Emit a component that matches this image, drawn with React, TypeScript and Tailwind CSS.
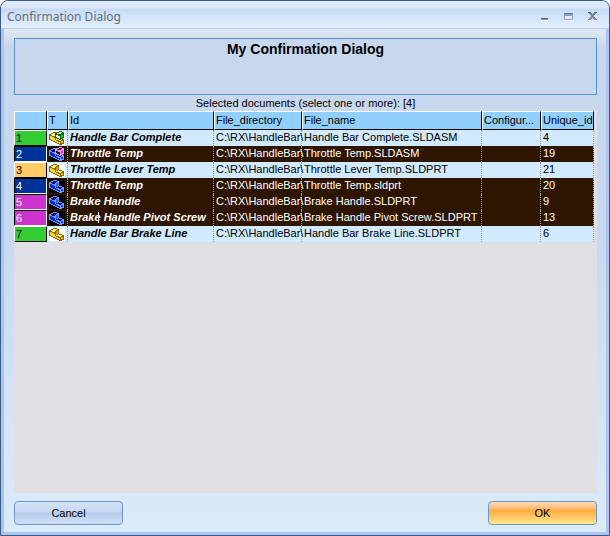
import { useState } from 'react';

type Doc = {
  id: string;
  type: 'assembly' | 'part';
  directory: string;
  name: string;
  configuration: string;
  uniqueId: number;
  color: string;
};

const columns = ['Id', 'File_directory', 'File_name', 'Configur...', 'Unique_id'];

const docs: Doc[] = [
  { id: 'Handle Bar Complete', type: 'assembly', directory: 'C:\\RX\\HandleBar\\', name: 'Handle Bar Complete.SLDASM', configuration: '', uniqueId: 4, color: 'bg-[#33cc33] text-black' },
  { id: 'Throttle Temp', type: 'assembly', directory: 'C:\\RX\\HandleBar\\', name: 'Throttle Temp.SLDASM', configuration: '', uniqueId: 19, color: 'bg-[#003399] text-white' },
  { id: 'Throttle Lever Temp', type: 'part', directory: 'C:\\RX\\HandleBar\\', name: 'Throttle Lever Temp.SLDPRT', configuration: '', uniqueId: 21, color: 'bg-[#ffcc66] text-black' },
  { id: 'Throttle Temp', type: 'part', directory: 'C:\\RX\\HandleBar\\', name: 'Throttle Temp.sldprt', configuration: '', uniqueId: 20, color: 'bg-[#003399] text-white' },
  { id: 'Brake Handle', type: 'part', directory: 'C:\\RX\\HandleBar\\', name: 'Brake Handle.SLDPRT', configuration: '', uniqueId: 9, color: 'bg-[#cc33cc] text-white' },
  { id: 'Brake Handle Pivot Screw', type: 'part', directory: 'C:\\RX\\HandleBar\\', name: 'Brake Handle Pivot Screw.SLDPRT', configuration: '', uniqueId: 13, color: 'bg-[#cc33cc] text-white' },
  { id: 'Handle Bar Brake Line', type: 'part', directory: 'C:\\RX\\HandleBar\\', name: 'Handle Bar Brake Line.SLDPRT', configuration: '', uniqueId: 6, color: 'bg-[#33cc33] text-black' },
];

// Selected rows show the icon with its colours inverted
function DocIcon({ type, selected }: { type: Doc['type']; selected: boolean }) {
  return (
    <svg
      viewBox="0 0 16 14"
      className={`block h-[14px] w-4 ${selected ? 'invert' : ''}`}
      shapeRendering="crispEdges"
      aria-label={type}
    >
      <rect width="16" height="14" fill="#fff" />
      {/* L-shaped block */}
      <path d="M0 3h2V2h2V1h4v1h2v5h3v1h2v5h-2v1h-3v-1H8v-1H6v-1H4v-1H2V9H0z" fill="#8a6400" />
      <path d="M1 4h1V3h2V2h4v1H7v1H6v1H3V4z" fill="#fff3a0" />
      <path d="M1 5h2v1h2v1h1v3H4V9H2V8H1z" fill="#ffd21c" />
      <path d="M7 4h2v3H8v1H7z" fill="#d9a000" />
      <path d="M7 8h2V7h1v1h3v1h-1v1h-2V9H7z" fill="#fff3a0" />
      <path d="M6 9h1v1h2v1h2v2h-1v-1H8v-1H6z" fill="#ffd21c" />
      <path d="M12 10h2v2h-2z" fill="#f0b800" />
      {type === 'assembly' && (
        <>
          <path d="M6 2h2V1h2V0h3v1h2v6h-1v1h-2v1h-2V8H8V7H6z" fill="#0c6e18" />
          <path d="M8 2h2V1h3v1h-1v1H8z" fill="#b4f0b4" />
          <path d="M7 4h2v1h2v3h-1V7H8V6H7z" fill="#e4ffe0" />
          <path d="M12 4h2v2h-1v1h-1z" fill="#38c438" />
        </>
      )}
    </svg>
  );
}

function TitleButtons() {
  return (
    <div className="flex items-center gap-2">
      <button aria-label="Minimize" className="h-4 w-4">
        <svg viewBox="0 0 16 16" className="h-4 w-4" shapeRendering="crispEdges">
          <path d="M5 10h7v1H5z" fill="#5d6067" />
          <path d="M5 11h7v1H5z" fill="#8494b0" />
          <path d="M5 12h7v1H5z" fill="#fff" />
        </svg>
      </button>
      <button aria-label="Maximize" className="h-4 w-4">
        <svg viewBox="0 0 16 16" className="h-4 w-4" shapeRendering="crispEdges">
          <path d="M4 5h9v7H4z" fill="#8aa0c6" />
          <path d="M4 5h9v1H4z" fill="#6b7079" />
          <path d="M5 8h7v3H5z" fill="#e4eefc" />
          <path d="M4 12h9v1H4z" fill="#fff" />
        </svg>
      </button>
      <button aria-label="Close" className="h-4 w-4">
        <svg viewBox="0 0 16 16" className="h-4 w-4" shapeRendering="crispEdges">
          <path d="M4 12h3v1H4zM10 12h3v1h-3z" fill="#fff" />
          <path d="M4 4h3v1h1v1h1V5h1V4h3v1h-1v1h-1v1h-1v2h1v1h1v1h1v1h-3v-1H9v-1H8v1H7v1H4v-1h1v-1h1V9h1V7H6V6H5V5H4z" fill="#7b8698" />
          <path d="M4 4h3v1H4zM10 4h3v1h-3z" fill="#5d6067" />
        </svg>
      </button>
    </div>
  );
}

export default function App() {
  const [selected, setSelected] = useState<number[]>([1, 3, 4, 5]);

  const toggle = (index: number) => {
    setSelected((prev) =>
      prev.includes(index) ? prev.filter((i) => i !== index) : [...prev, index]
    );
  };

  const headCell =
    'h-[19px] border-t border-l border-r border-b border-t-white border-l-white border-r-black border-b-black bg-[#91cfff] px-px pb-[2px] text-left font-normal';
  const cell = 'h-4 border-r border-dotted border-[#999] px-[2px] pb-[2px] whitespace-nowrap';

  return (
    <div className="bg-white font-['Liberation_Sans',Arial,sans-serif] text-[11px] text-black">
      <div className="flex min-h-screen flex-col overflow-hidden rounded-t-lg border border-[#3b5a88] bg-[#a9c6f0]">
        {/* Title bar */}
        <header className="flex h-7 shrink-0 items-center justify-between border-b border-[#b0d2f8] bg-[linear-gradient(#e3ebfb_0,#d8e5f9_7px,#c6daf5_8px,#e3f0fe_100%)] pt-[2px] pr-[9px] pl-[6px]">
          <h1 className="pt-[2px] font-['Noto_Sans',sans-serif] text-[12px] text-[#66707c]">Confirmation Dialog</h1>
          <TitleButtons />
        </header>

        <main className="mx-[3px] mb-[3px] flex flex-1 flex-col bg-[linear-gradient(#dfe8f3_0,#cddaeb_16px,#c6d7ee_17px,#c8d9ef_40%,#dbebf9_100%)] pt-[9px] pr-[9px] pb-[7px] pl-[10px]">
          {/* Title panel */}
          <div className="h-[57px] shrink-0 border border-[#5b92d3] bg-[#c7d8ee] pt-[2px] text-center">
            <h2 className="text-[14px] leading-4 font-bold">My Confirmation Dialog</h2>
          </div>
          <p className="pt-px pb-px text-center leading-[14px]">
            Selected documents (select one or more): [{selected.length}]
          </p>

          {/* Document grid */}
          <div className="flex-1 bg-[#e0dfe3]">
            <table className="w-[580px] table-fixed border-separate border-spacing-0 leading-[14px]">
              <colgroup>
                <col className="w-[33px]" />
                <col className="w-[21px]" />
                <col className="w-[146px]" />
                <col className="w-[88px]" />
                <col className="w-[180px]" />
                <col className="w-[59px]" />
                <col className="w-[53px]" />
              </colgroup>
              <thead>
                <tr>
                  <th className={headCell} aria-label="Row" />
                  <th className={headCell}>T</th>
                  {columns.map((column) => (
                    <th key={column} className={headCell}>{column}</th>
                  ))}
                </tr>
              </thead>
              <tbody>
                {docs.map((doc, index) => {
                  const isSelected = selected.includes(index);
                  return (
                    <tr
                      key={doc.uniqueId}
                      onClick={() => toggle(index)}
                      aria-selected={isSelected}
                      className={isSelected ? 'bg-[#2e1500] text-white' : 'bg-[#d1eaff] text-black'}
                    >
                      <th
                        scope="row"
                        className={`h-4 border pl-px text-left font-normal ${doc.color} ${
                          isSelected
                            ? 'border-t-black border-l-black border-r-white border-b-white'
                            : 'border-t-white border-l-white border-r-black border-b-black'
                        }`}
                      >
                        {index + 1}
                      </th>
                      <td className="h-4 border-r border-dotted border-[#999] pl-[2px]">
                        <DocIcon type={doc.type} selected={isSelected} />
                      </td>
                      <td className={`${cell} font-bold italic`}>
                        <span className="relative">
                          {doc.id}
                          {index === 5 && (
                            <svg viewBox="0 0 5 13" className="absolute top-0 left-[26px] h-[13px] w-[5px]" shapeRendering="crispEdges" aria-hidden="true">
                              <path d="M2 1h1v11H2z" fill="#d1eaff" />
                            </svg>
                          )}
                        </span>
                      </td>
                      <td className={cell}>{doc.directory}</td>
                      <td className={cell}>{doc.name}</td>
                      <td className={cell}>{doc.configuration}</td>
                      <td className={cell}>{doc.uniqueId}</td>
                    </tr>
                  );
                })}
              </tbody>
            </table>
          </div>

          {/* Actions */}
          <div className="flex shrink-0 justify-between pt-2">
            <button className="h-6 w-[109px] rounded-sm border border-[#6f98cf] bg-[linear-gradient(#d5e3f7_0,#c6d7f1_45%,#b7cbea_50%,#cfdff8_100%)]">
              Cancel
            </button>
            <button className="h-6 w-[109px] rounded-sm border border-[#6f98cf] bg-[linear-gradient(#fbdcb8_0,#fdbd78_28%,#ffab43_36%,#ffc660_65%,#ffe98e_100%)]">
              OK
            </button>
          </div>
        </main>
      </div>
    </div>
  );
}
